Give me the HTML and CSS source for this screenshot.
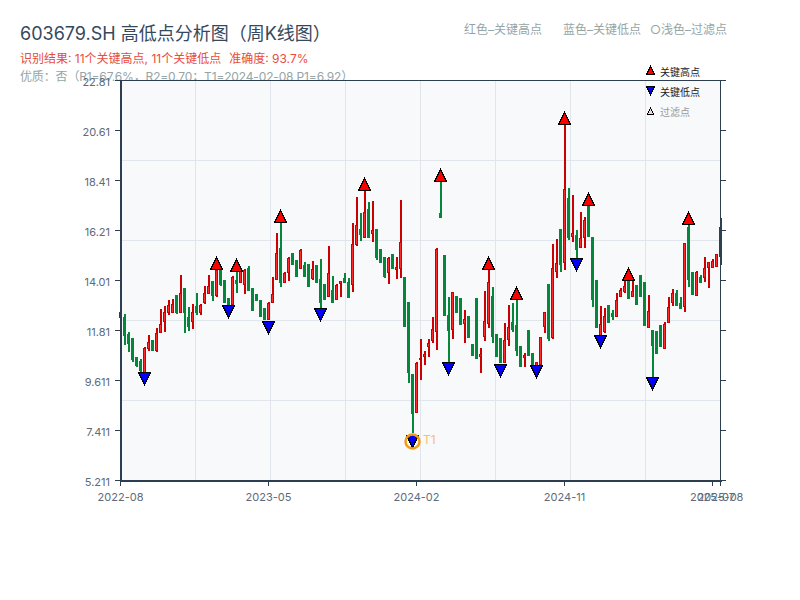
FILE: index.html
```html
<!DOCTYPE html>
<html lang="zh-CN">
<head>
    <meta charset="UTF-8">
    <title>603679.SH 高低点分析图</title>
    <link rel="stylesheet" href="styles.css">
</head>
<body>
    <div class="header">
        <div class="title-row">
            <h1 class="title">603679.SH 高低点分析图（周K线图）</h1>
            <div class="color-key">
                <span>红色–关键高点</span>
                <span>蓝色–关键低点</span>
                <span>○浅色–过滤点</span>
            </div>
        </div>
        <p class="result">识别结果: 11个关键高点, 11个关键低点<span class="accuracy">准确度: 93.7%</span></p>
        <p class="quality">优质：否（R1=67.6%，R2=0.70；T1=2024-02-08 P1=6.92）</p>
    </div>

    <svg class="chart" id="chart" width="800" height="538" viewBox="0 62 800 538"></svg>

    <script>
        const NS = "http://www.w3.org/2000/svg";
        const chart = document.getElementById("chart");

        // one row per week, left to right: hi, body top, body bottom, lo (pixel y)
        const candles = [
            ["r",310,312,318,320],["g",314,317,336,345],["g",332,334,344,352],["g",338,338,360,362],
            ["g",357,357,366,367],["g",359,361,371,372],["r",347,348,373,373],["r",335,342,349,351],
            ["g",340,340,351,351],["r",328,333,351,352],["r",309,324,333,333],["r",306,312,322,332],
            ["r",300,305,313,315],["r",299,304,313,313],["g",295,295,313,314],["r",275,293,313,313],
            ["g",288,288,313,333],["g",307,317,327,331],["r",304,312,322,329],["g",293,306,313,315],
            ["r",304,305,313,315],["r",286,293,303,304],["r",275,286,294,294],["g",281,281,296,301],
            ["r",269,270,296,297],["g",269,270,285,286],["g",280,280,303,303],["g",298,298,306,306],
            ["r",276,277,305,305],["g",272,280,284,293],["r",270,270,283,283],["r",269,270,285,294],
            ["g",266,268,291,291],["g",288,288,311,311],["g",294,294,301,301],["g",300,300,317,317],
            ["g",308,308,320,320],["r",302,303,320,320],["r",277,294,303,303],["r",233,253,280,280],
            ["g",222,248,283,287],["r",272,273,283,283],["r",257,258,273,281],["g",253,253,265,265],
            ["g",260,260,277,277],["r",249,250,269,269],["g",262,265,277,277],["g",264,264,287,287],
            ["r",261,269,279,280],["g",265,265,283,283],["g",259,279,303,310],["g",284,284,300,300],
            ["r",246,273,297,297],["g",276,290,303,303],["r",284,285,300,300],["r",281,281,284,297],
            ["g",273,278,283,283],["g",278,282,298,298],["r",223,244,285,292],["r",197,225,245,246],
            ["g",213,229,235,241],["r",190,212,238,238],["g",202,209,238,238],["r",201,230,234,242],
            ["g",229,229,258,260],["g",249,249,263,263],["g",257,257,277,278],["r",257,258,273,284],
            ["g",254,254,269,269],["r",257,267,270,279],["r",200,242,269,278],["g",277,277,327,327],
            ["g",302,302,373,383],["g",374,374,414,433],["r",362,363,413,413],["r",339,358,360,380],
            ["r",351,354,357,365],["r",339,343,347,357],["r",317,329,341,343],["r",248,249,332,350],
            ["g",182,213,218,218],["g",255,255,316,316],["g",297,315,331,362],["r",292,292,330,339],
            ["g",296,296,313,313],["g",298,298,325,325],["r",310,319,324,343],["g",316,316,338,338],
            ["g",344,344,356,356],["g",298,298,359,359],["r",348,354,357,373],
            ["r",291,321,337,341],["r",267,282,324,328],["g",287,296,337,343],["g",334,334,357,357],
            ["g",338,338,363,363],["r",323,340,363,363],["r",305,327,340,346],["g",303,322,330,332],
            ["g",298,325,351,356],["g",346,346,367,367],["r",353,355,358,367],["g",330,330,356,356],
            ["g",353,353,365,365],["r",362,362,368,368],["r",337,337,365,365],["r",312,312,327,333],
            ["g",284,284,339,341],["r",244,268,338,339],["r",239,263,272,278],["g",229,229,265,272],
            ["r",125,189,263,270],["g",188,198,238,240],["r",195,233,237,242],["g",230,235,250,258],
            ["r",212,238,248,248],["r",217,220,238,248],["g",205,205,237,237],["g",237,237,300,307],
            ["g",280,280,328,328],["r",306,324,340,347],["r",308,316,332,333],["g",305,305,323,323],
            ["g",310,313,317,320],["r",293,300,317,317],["r",288,290,297,297],["r",280,286,292,293],
            ["g",280,280,299,299],["r",280,291,297,297],["g",285,285,305,305],["g",275,275,297,297],
            ["g",282,282,326,326],["r",295,311,328,328],["g",330,330,346,377],["g",331,331,354,354],
            ["g",325,325,347,347],["r",322,324,349,349],["r",297,307,323,323],["r",289,293,303,306],
            ["g",290,293,306,306],["g",297,303,309,309],["r",243,243,307,312],["g",223,227,280,287],
            ["g",272,272,295,295],["r",271,272,296,296],["g",275,277,283,283],["r",257,268,278,282],
            ["r",262,262,268,288],["r",259,261,268,268],["r",254,254,267,267],["r",218,227,257,265]
        ];

        const peaks = [[216,257],[236,259],[280,210],[364,178],[440,169],[488,257],[516,287],[564,112],[588,193],[628,268],[688,212]];
        const troughs = [[144,372],[228,305],[268,321],[320,308],[412,435],[448,362],[500,364],[536,365],[576,258],[600,335],[652,377]];
        const priceLabels = ["22.81","20.61","18.41","16.21","14.01","11.81","9.611","7.411","5.211"];
        const dateLabels = [[120,"2022-08"],[268,"2023-05"],[416,"2024-02"],[564,"2024-11"],[712,"2025-07"],[720,"2025-08"]];

        function add(tag, attrs, cls, text) {
            const node = document.createElementNS(NS, tag);
            for (const key in attrs) node.setAttribute(key, attrs[key]);
            if (cls) node.setAttribute("class", cls);
            if (text) node.textContent = text;
            chart.appendChild(node);
            return node;
        }

        function triangle(x, y, w, h, dir, cls) {
            const tip = dir === "up" ? y : y + h;
            const base = dir === "up" ? y + h : y;
            add("polygon", { points: `${x},${tip} ${x - w / 2},${base} ${x + w / 2},${base}` }, cls);
        }

        add("rect", { x: 120, y: 80, width: 600, height: 400 }, "plot");
        for (let x = 195.5; x < 720; x += 75) add("line", { x1: x, x2: x, y1: 80, y2: 480 }, "grid");
        for (let y = 160.5; y < 480; y += 80) add("line", { x1: 120, x2: 720, y1: y, y2: y }, "grid");

        candles.forEach((c, i) => {
            const x = 120 + i * 4;
            add("rect", { x: x, y: c[1], width: 2, height: c[4] - c[1] }, c[0] === "r" ? "wick-up" : "wick-down");
            if (c[0] === "r") add("rect", { x: x - 0.5, y: c[2] + 0.5, width: 2, height: c[3] - c[2] - 1 }, "body-up");
            else add("rect", { x: x - 1, y: c[2], width: 3, height: c[3] - c[2] }, "body-down");
        });

        peaks.forEach(p => triangle(p[0] + 0.5, p[1] + 0.5, 12, 12, "up", "mark-high"));
        troughs.forEach(p => triangle(p[0] + 0.5, p[1] + 0.5, 12, 12, "down", "mark-low"));

        add("circle", { cx: 412.5, cy: 441.5, r: 7 }, "t1-ring");
        add("text", { x: 423, y: 444 }, "t1-label", "T1");

        // frame and ticks
        add("line", { x1: 120, x2: 720, y1: 80.5, y2: 80.5 }, "axis");
        add("line", { x1: 720.5, x2: 720.5, y1: 80, y2: 482 }, "axis");
        add("line", { x1: 121, x2: 121, y1: 80, y2: 482 }, "axis axis-thick");
        add("line", { x1: 120, x2: 722, y1: 481, y2: 481 }, "axis axis-thick");

        priceLabels.forEach((label, i) => {
            const y = 80.5 + i * 50;
            add("line", { x1: 115, x2: 120, y1: y, y2: y }, "axis");
            add("line", { x1: 721, x2: 726, y1: y, y2: y }, "axis");
            add("text", { x: 110, y: y + 5, "text-anchor": "end" }, "tick-label", label);
        });
        dateLabels.forEach(d => {
            add("line", { x1: d[0] + 0.5, x2: d[0] + 0.5, y1: 482, y2: 486 }, "axis");
            add("text", { x: d[0] + 0.5, y: 501, "text-anchor": "middle" }, "tick-label", d[1]);
        });

        // legend above the plot
        triangle(650.5, 66.5, 8, 8, "up", "mark-high");
        add("text", { x: 660, y: 76 }, "legend-text", "关键高点");
        triangle(650.5, 86.5, 8, 8, "down", "mark-low");
        add("text", { x: 660, y: 96 }, "legend-text", "关键低点");
        triangle(650.5, 108, 6, 6, "up", "mark-filtered");
        add("text", { x: 660, y: 116 }, "legend-text legend-muted", "过滤点");
    </script>
</body>
</html>
```

FILE: styles.css
```css
* {
    margin: 0;
    padding: 0;
    box-sizing: border-box;
}
body {
    width: 800px;
    height: 600px;
    overflow: hidden;
    background-color: #ffffff;
    font-family: Inter, "Noto Sans CJK SC", sans-serif;
}
.header {
    height: 62px;
    padding: 21px 73px 0 20px;
}
.title-row {
    display: flex;
    justify-content: space-between;
    align-items: flex-start;
    height: 30px;
}
.title {
    font-size: 18px;
    font-weight: 400;
    line-height: 26px;
    color: #34495e;
}
.color-key {
    display: flex;
    gap: 21px;
    font-size: 12px;
    line-height: 18px;
    color: #95a5a6;
}
.color-key span:last-child {
    margin-left: -12px;
}
.result {
    font-size: 12px;
    line-height: 16px;
    color: #e74c3c;
}
.accuracy {
    margin-left: 8px;
}
.quality {
    margin-top: 2px;
    font-size: 12px;
    line-height: 16px;
    letter-spacing: -0.15px;
    color: #95a5a6;
}
.chart {
    position: relative;
    display: block;
}
.plot {
    fill: #f8f9fb;
}
.grid {
    stroke: #e1e5ec;
    stroke-width: 1;
}
.axis {
    stroke: #2c3e50;
    stroke-width: 1;
}
.axis-thick {
    stroke-width: 2;
}
.wick-up {
    fill: #cc0000;
}
.body-up {
    fill: #ff2a2a;
    stroke: #cc0000;
    stroke-width: 1;
}
.wick-down, .body-down {
    fill: #05873b;
}
.mark-high, .mark-low, .mark-filtered {
    stroke: #000000;
    stroke-width: 1;
    shape-rendering: crispEdges;
}
.mark-high {
    fill: #ff0000;
}
.mark-low {
    fill: #0000ff;
}
.mark-filtered {
    fill: #fbd5d5;
}
.t1-ring {
    fill: none;
    stroke: #f39c12;
    stroke-width: 2.5;
}
.t1-label {
    font-size: 12px;
    fill: #f7bf6b;
}
.tick-label {
    font-size: 11px;
    fill: #5d6b7a;
}
.legend-text {
    font-size: 10px;
    fill: #222222;
}
.legend-muted {
    fill: #999999;
}
```
